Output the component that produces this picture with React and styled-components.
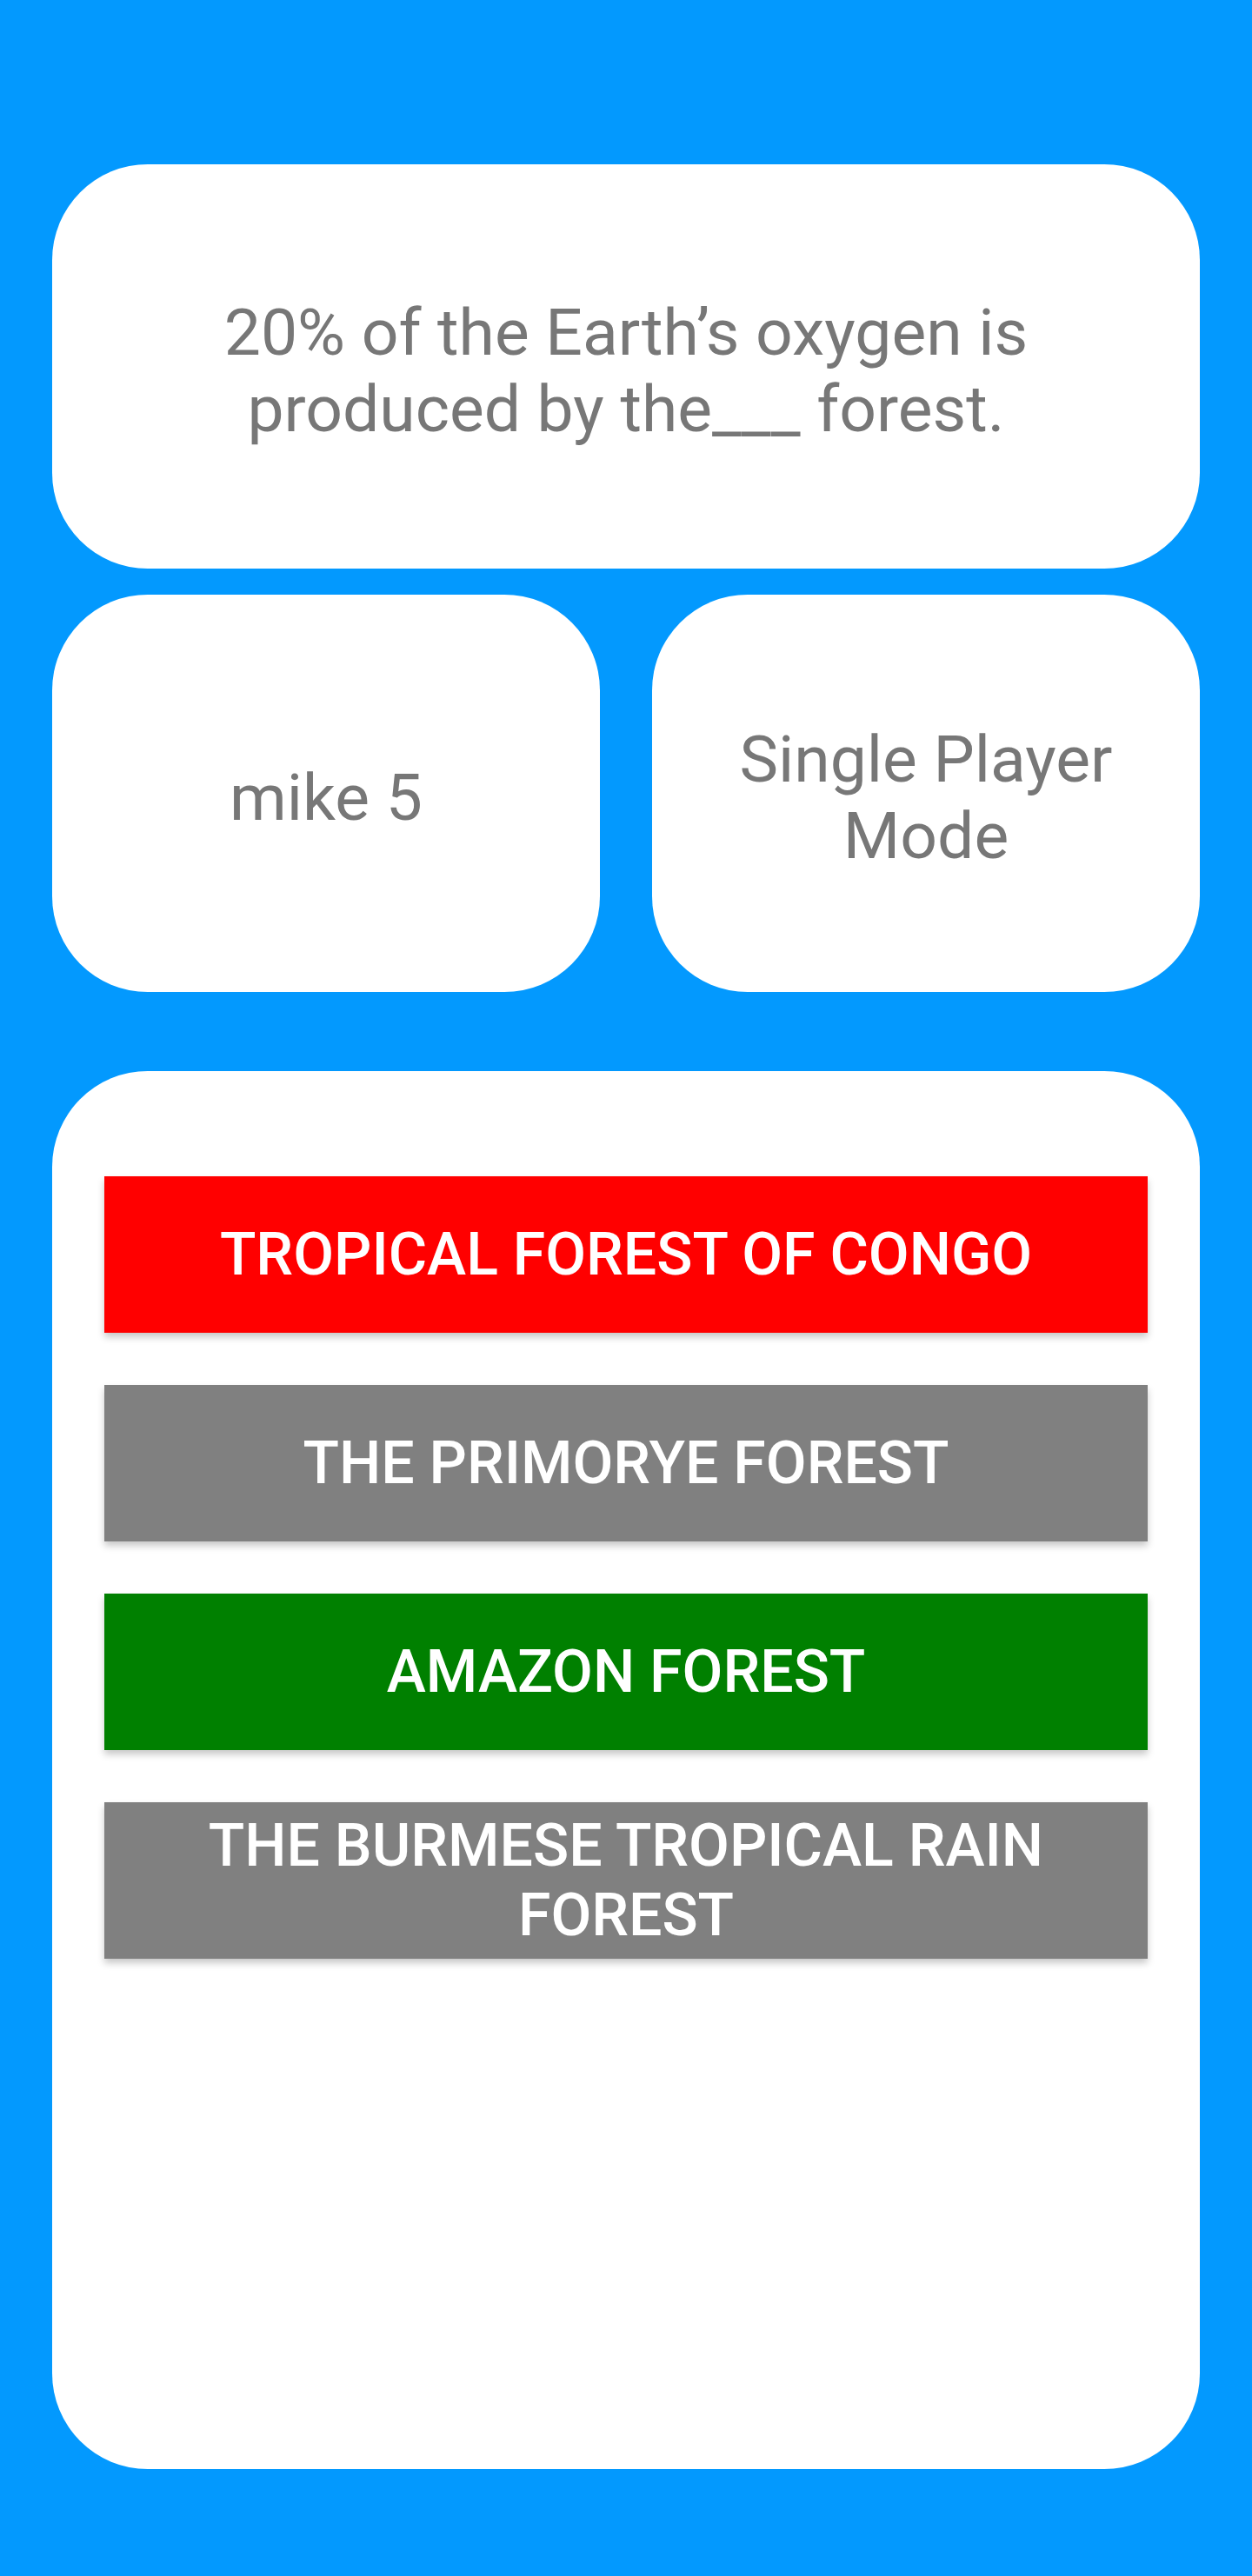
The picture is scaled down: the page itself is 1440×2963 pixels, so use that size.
import React from "react";
import styled, { createGlobalStyle } from "styled-components";

const answers = [
  { id: 1, label: "Tropical Forest of Congo", tone: "#ff0000" },
  { id: 2, label: "The Primorye Forest", tone: "#808080" },
  { id: 3, label: "Amazon Forest", tone: "#008000" },
  { id: 4, label: "The Burmese Tropical Rain Forest", tone: "#808080" },
];

function App() {
  return (
    <>
      <GlobalStyle />
      <Screen>
        <QuestionCard>
          <QuestionText>
            20% of the Earth’s oxygen is produced by the___ forest.
          </QuestionText>
        </QuestionCard>

        <InfoRow>
          <InfoCard>
            <InfoText>mike 5</InfoText>
          </InfoCard>
          <InfoCard>
            <InfoText>
              Single Player
              <br />
              Mode
            </InfoText>
          </InfoCard>
        </InfoRow>

        <AnswerPanel>
          {answers.map((a) => (
            <AnswerButton key={a.id} $tone={a.tone}>
              {a.label}
            </AnswerButton>
          ))}
        </AnswerPanel>
      </Screen>
    </>
  );
}

const GlobalStyle = createGlobalStyle`
  html, body {
    margin: 0;
    padding: 0;
    background: #0399fe;
  }
  * {
    box-sizing: border-box;
  }
`;

const Screen = styled.div`
  width: 1440px;
  min-height: 2963px;
  background: #0399fe;
  padding: 189px 60px 123px;
  display: flex;
  flex-direction: column;
  font-family: Roboto, "Liberation Sans", sans-serif;
`;

const QuestionCard = styled.div`
  height: 465px;
  background: #ffffff;
  border-radius: 110px;
  display: flex;
  align-items: center;
  justify-content: center;
  padding: 8px 140px 0;
`;

const QuestionText = styled.p`
  margin: 0;
  text-align: center;
  color: #777777;
  font-size: 75px;
  line-height: 88px;
  font-weight: 400;
`;

const InfoRow = styled.div`
  display: grid;
  grid-template-columns: 1fr 1fr;
  gap: 60px;
  margin-top: 30px;
`;

const InfoCard = styled.div`
  height: 457px;
  background: #ffffff;
  border-radius: 110px;
  display: flex;
  align-items: center;
  justify-content: center;
  padding: 8px 30px 0;
`;

const InfoText = styled.p`
  margin: 0;
  text-align: center;
  color: #777777;
  font-size: 75px;
  line-height: 88px;
`;

const AnswerPanel = styled.div`
  margin-top: 91px;
  height: 1608px;
  background: #ffffff;
  border-radius: 110px;
  padding: 121px 60px 0;
  display: flex;
  flex-direction: column;
  gap: 60px;
`;

const AnswerButton = styled.button`
  height: 180px;
  border: none;
  border-radius: 0;
  background: ${(p) => p.$tone};
  color: #ffffff;
  font-family: Roboto, "Liberation Sans", sans-serif;
  font-size: 68px;
  line-height: 80px;
  font-weight: 500;
  text-transform: uppercase;
  text-align: center;
  padding: 0 30px;
  box-shadow: 0 5px 8px rgba(0, 0, 0, 0.22);
  cursor: pointer;
`;

export default App;
